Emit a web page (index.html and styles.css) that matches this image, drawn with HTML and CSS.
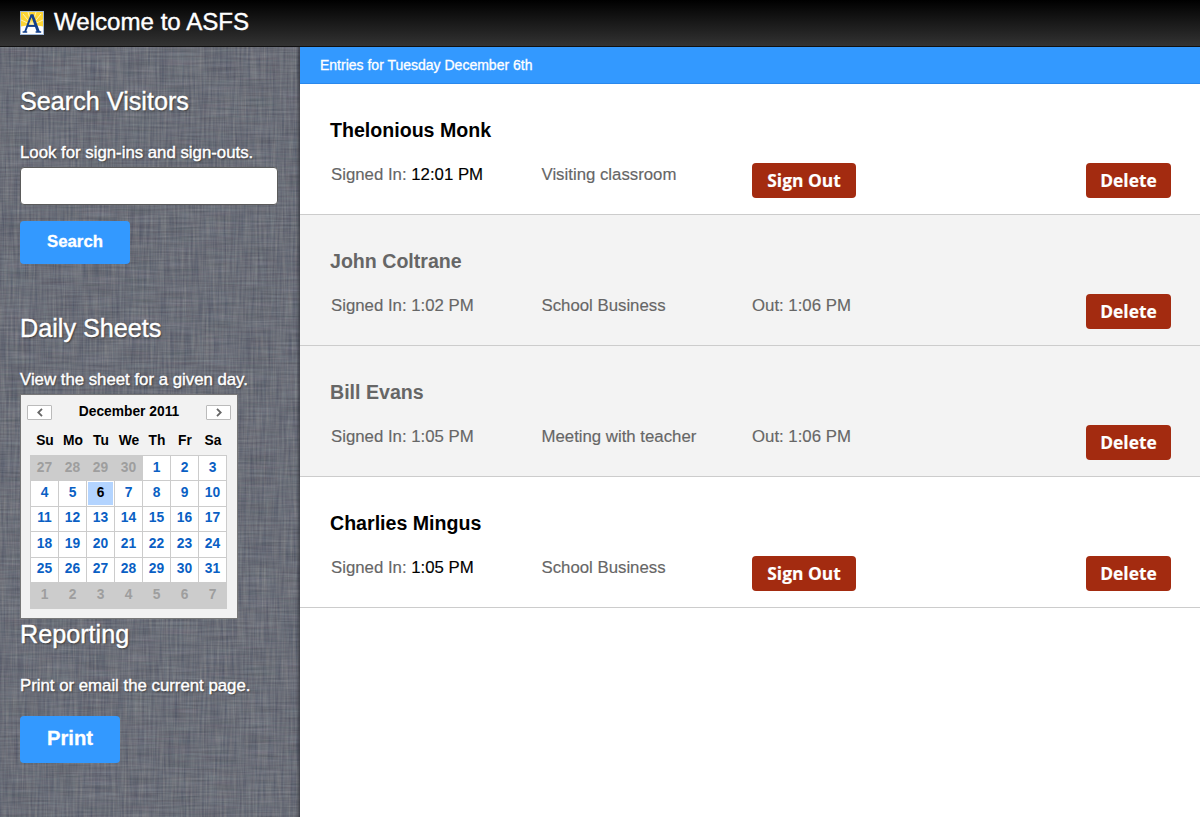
FILE: index.html
```html
<!DOCTYPE html>
<html lang="en">
<head>
<meta charset="utf-8">
<title>Welcome to ASFS</title>
<link rel="stylesheet" href="styles.css">
</head>
<body>
<header class="topbar">
  <svg class="logo" viewBox="0 0 24 24" aria-hidden="true">
    <rect width="24" height="24" fill="#9eb6d8"/>
    <rect x="1" y="1" width="22" height="22" fill="#fdd535"/>
    <path d="M12 14 1 9M12 14 3 3M12 14 8 1M12 14 16 1M12 14 21 3M12 14 23 9" stroke="#fff3b5" stroke-width="1"/>
    <path d="M1 15.5Q12 13 23 15.5V23H1z" fill="#fff"/>
    <path d="M2.6 21h4.6M15.6 21h5.6" stroke="#123f8c" stroke-width="1.5" fill="none"/>
    <path d="M10.6 3.2h2.8L20 21h-3.2L11.6 6.2 6 21H4z" fill="#123f8c"/>
    <path d="M7.6 14.9h8.4" stroke="#123f8c" stroke-width="2"/>
  </svg>
  <h1>Welcome to ASFS</h1>
</header>
<div class="layout">
  <aside class="sidebar">
    <svg class="texture" width="300" height="770" aria-hidden="true">
      <filter id="weft" x="0" y="0" width="100%" height="100%" color-interpolation-filters="sRGB">
        <feTurbulence type="fractalNoise" baseFrequency="0.025 0.45" numOctaves="3" seed="4"/>
        <feColorMatrix values="0.26 0.06 0 0 0.26  0.26 0 0.05 0 0.278  0.27 0 0 0 0.337  0 0 0 0 1"/>
      </filter>
      <filter id="warp" x="0" y="0" width="100%" height="100%" color-interpolation-filters="sRGB">
        <feTurbulence type="fractalNoise" baseFrequency="0.45 0.025" numOctaves="3" seed="9"/>
        <feColorMatrix values="0.3 0.08 0 0 0.23  0.3 0.03 0 0 0.268  0.22 0 0 0 0.362  0 0 0 0 1"/>
      </filter>
      <rect width="300" height="770" filter="url(#weft)"/>
      <rect width="300" height="770" filter="url(#warp)" opacity="0.5"/>
    </svg>
    <section class="panel search">
      <h2>Search Visitors</h2>
      <p>Look for sign-ins and sign-outs.</p>
      <input class="field" type="text" aria-label="Visitor">
      <button class="action">Search</button>
    </section>
    <section class="panel sheets">
      <h2>Daily Sheets</h2>
      <p>View the sheet for a given day.</p>
      <div class="calendar">
        <div class="cal-head">
          <button class="nav"><svg width="8" height="9" viewBox="0 0 8 9"><path d="M6 .8 2.3 4.5 6 8.2" fill="none" stroke="#666" stroke-width="1.8"/></svg></button>
          <strong>December 2011</strong>
          <button class="nav"><svg width="8" height="9" viewBox="0 0 8 9"><path d="M2 .8 5.7 4.5 2 8.2" fill="none" stroke="#666" stroke-width="1.8"/></svg></button>
        </div>
        <div class="weekdays"><span>Su</span><span>Mo</span><span>Tu</span><span>We</span><span>Th</span><span>Fr</span><span>Sa</span></div>
        <div class="days">
          <span class="off">27</span><span class="off">28</span><span class="off">29</span><span class="off">30</span><span>1</span><span>2</span><span>3</span>
          <span>4</span><span>5</span><span class="today">6</span><span>7</span><span>8</span><span>9</span><span>10</span>
          <span class="short">11</span><span class="short">12</span><span class="short">13</span><span class="short">14</span><span class="short">15</span><span class="short">16</span><span class="short">17</span>
          <span>18</span><span>19</span><span>20</span><span>21</span><span>22</span><span>23</span><span>24</span>
          <span class="short">25</span><span class="short">26</span><span class="short">27</span><span class="short">28</span><span class="short">29</span><span class="short">30</span><span class="short">31</span>
          <span class="off">1</span><span class="off">2</span><span class="off">3</span><span class="off">4</span><span class="off">5</span><span class="off">6</span><span class="off">7</span>
        </div>
      </div>
    </section>
    <section class="panel reporting">
      <h2>Reporting</h2>
      <p>Print or email the current page.</p>
      <button class="action print">Print</button>
    </section>
  </aside>
  <main class="content">
    <div class="banner">Entries for Tuesday December 6th</div>
    <article class="entry">
      <h3>Thelonious Monk</h3>
      <div class="row"><span>Signed In: <b>12:01 PM</b></span><span>Visiting classroom</span><button class="danger">Sign Out</button><button class="danger delete">Delete</button></div>
    </article>
    <article class="entry done">
      <h3>John Coltrane</h3>
      <div class="row"><span>Signed In: <b>1:02 PM</b></span><span>School Business</span><span>Out: 1:06 PM</span><button class="danger delete">Delete</button></div>
    </article>
    <article class="entry done">
      <h3>Bill Evans</h3>
      <div class="row"><span>Signed In: <b>1:05 PM</b></span><span>Meeting with teacher</span><span>Out: 1:06 PM</span><button class="danger delete">Delete</button></div>
    </article>
    <article class="entry">
      <h3>Charlies Mingus</h3>
      <div class="row"><span>Signed In: <b>1:05 PM</b></span><span>School Business</span><button class="danger">Sign Out</button><button class="danger delete">Delete</button></div>
    </article>
  </main>
</div>
</body>
</html>
```
FILE: styles.css
```css
* { box-sizing: border-box; }
body {
  margin: 0;
  height: 817px;
  overflow: hidden;
  background: #fff;
  font: 14px/20px "Liberation Sans", Arial, sans-serif;
}
h1, h2, h3, p { margin: 0; font-weight: normal; }
button { border: 0; padding: 0; font-family: inherit; }

.topbar {
  display: flex;
  align-items: center;
  gap: 10px;
  height: 47px;
  padding: 0 20px;
  border-bottom: 1px solid #111;
  background: linear-gradient(#000, #333);
  color: #fff;
}
.logo { width: 24px; height: 24px; }
.topbar h1 {
  padding-bottom: 2px;
  font-size: 24.1px;
  line-height: 44px;
  -webkit-text-stroke: 0.4px #fff;
}

.layout { display: flex; height: 770px; }
.sidebar {
  position: relative;
  width: 300px;
  padding-left: 20px;
  color: #fff;
  background: #6b6e79;
}
.sidebar::after {
  content: "";
  position: absolute;
  inset: 0 0 0 auto;
  width: 4px;
  background: linear-gradient(to right, transparent, rgba(40, 42, 50, 0.65));
}
.texture { position: absolute; inset: 0; }
.panel { position: relative; }
.panel h2 {
  font-size: 25.2px;
  line-height: 30px;
  text-shadow: 1px 1px 2px #333;
  -webkit-text-stroke: 0.4px #fff;
}
.panel p {
  margin-top: 27px;
  font-size: 16.8px;
  line-height: 20px;
  text-shadow: 1px 1px 2px #333;
  -webkit-text-stroke: 0.4px #fff;
}
.search { padding-top: 39px; height: 227px; }
.sheets { padding-top: 39px; height: 345px; }
.field {
  display: block;
  width: 258px;
  height: 38px;
  margin-top: 4px;
  border: 1px solid #5b5b5b;
  border-radius: 4px;
  background: #fff;
}
.action {
  display: block;
  width: 110px;
  height: 43px;
  margin-top: 16px;
  padding-bottom: 2px;
  border-radius: 4px;
  background: #39f;
  color: #fff;
  font-size: 16.8px;
  font-weight: bold;
  -webkit-text-stroke: 0.3px #fff;
}
.action.print {
  width: 100px;
  height: 47px;
  margin-top: 20px;
  padding-bottom: 3px;
  font-size: 20.2px;
}

.calendar {
  width: 218px;
  height: 225px;
  margin-top: 4px;
  border: 1px solid #777;
  background: #f2f2f2;
  color: #000;
  font-size: 13.8px;
  font-weight: bold;
  text-align: center;
}
.cal-head {
  display: flex;
  justify-content: space-between;
  align-items: center;
  padding: 7px 6px 0;
  height: 27px;
}
.cal-head strong { line-height: 18px; }
.nav {
  display: flex;
  align-items: center;
  justify-content: center;
  width: 25px;
  height: 15px;
  border: 1px solid #bbb;
  border-radius: 1px;
  background: #fff;
}
.weekdays {
  display: grid;
  grid-template-columns: repeat(7, 28px);
  margin: 9px 0 0 10px;
  line-height: 20px;
}
.days {
  display: grid;
  grid-template-columns: repeat(7, 27px);
  grid-template-rows: 24px 25px 24px 25px 24px 25px;
  gap: 1px;
  width: 197px;
  margin: 4px 0 0 9px;
  padding: 1px;
  background: #ccc;
  color: #0a5fc4;
}
.days span { background: #fff; line-height: 23px; }
.days .short { line-height: 21px; }
.days .off { background: #ccc; color: #9e9e9e; }
.days .today { background: #b3d4ff; color: #000; border: 1px solid #fff; line-height: 21px; }

.content { flex: 1; }
.banner {
  height: 37px;
  padding-left: 20px;
  border-bottom: 1px solid #2a88ec;
  background: #39f;
  color: #fff;
  line-height: 36px;
  -webkit-text-stroke: 0.3px #fff;
}
.entry {
  height: 131px;
  padding: 34px 29px 0 30px;
  border-bottom: 1px solid #ccc;
}
.entry h3 { font-size: 19.6px; font-weight: bold; line-height: 24px; }
.row {
  display: grid;
  grid-template-columns: 210.5px 210.5px 1fr auto;
  align-items: start;
  margin-top: 21px;
  padding-left: 1px;
  font-size: 16.8px;
  line-height: 24px;
  color: #666;
  -webkit-text-stroke: 0.15px;
}
.row b { font-weight: normal; color: #000; }
.done { background: #f3f3f3; }
.done h3, .done .row b { color: #666; }
.danger {
  display: block;
  width: 104px;
  height: 35px;
  border-radius: 4px;
  background: #a32b10;
  color: #fff;
  font: bold 17.4px/35px "Open Sans", "Noto Sans", sans-serif;
}
.delete { width: 85px; }
```
